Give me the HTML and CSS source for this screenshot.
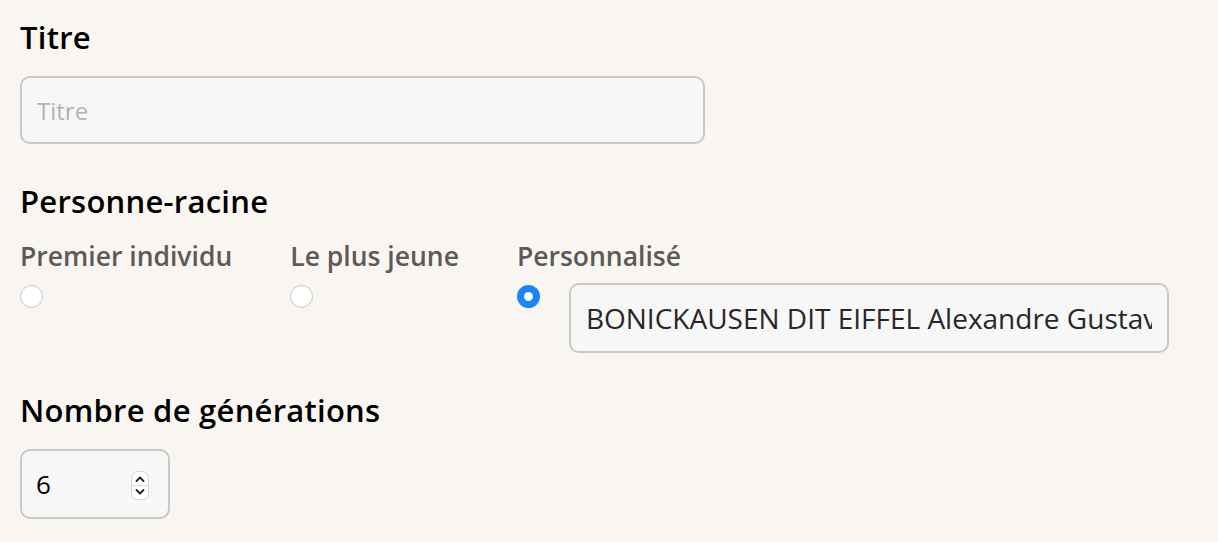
FILE: index.html
```html
<!DOCTYPE html>
<html lang="fr">
<head>
<meta charset="utf-8">
<link rel="stylesheet" href="styles.css">
</head>
<body>
<form class="form">
  <div class="field">
    <label class="field-label" for="titre">Titre</label>
    <input class="text-input title-input" id="titre" type="text" placeholder="Titre">
  </div>

  <div class="field">
    <div class="field-label">Personne-racine</div>
    <div class="root-options">
      <label class="option">
        <span class="option-label">Premier individu</span>
        <input class="radio" type="radio" name="root">
      </label>
      <label class="option">
        <span class="option-label">Le plus jeune</span>
        <input class="radio" type="radio" name="root">
      </label>
      <div class="option">
        <span class="option-label">Personnalisé</span>
        <div class="custom-row">
          <input class="radio" type="radio" name="root" checked>
          <input class="text-input person-input" type="text" value="BONICKAUSEN DIT EIFFEL Alexandre Gustave">
        </div>
      </div>
    </div>
  </div>

  <div class="field">
    <label class="field-label" for="gen">Nombre de générations</label>
    <div class="number-box">
      <input class="number-input" id="gen" type="text" value="6">
      <span class="spinner">
        <svg width="18" height="29" viewBox="0 0 18 29">
          <rect x="0.5" y="0.5" width="17" height="28" rx="6" fill="#fff" stroke="#d4d4d4"/>
          <line x1="1" y1="14.5" x2="17" y2="14.5" stroke="#dcdcdc"/>
          <path d="M5.5 10 L9 6.5 L12.5 10" fill="none" stroke="#222" stroke-width="1.8" stroke-linecap="round" stroke-linejoin="round"/>
          <path d="M5.5 19 L9 22.5 L12.5 19" fill="none" stroke="#222" stroke-width="1.8" stroke-linecap="round" stroke-linejoin="round"/>
        </svg>
      </span>
    </div>
  </div>
</form>
</body>
</html>
```

FILE: styles.css
```css
html, body {
  margin: 0;
  padding: 0;
  background: #f9f5f1;
}

body {
  font-family: "Open Sans", "Noto Sans", sans-serif;
  color: #000;
}

.form {
  padding: 19px 20px 0 20px;
  display: flex;
  flex-direction: column;
  gap: 39px;
}

.field {
  display: flex;
  flex-direction: column;
  align-items: flex-start;
}

.field-label {
  font-size: 31px;
  font-weight: 600;
  line-height: 36px;
  letter-spacing: 0.25px;
  margin-bottom: 21px;
  color: #000;
}

.text-input {
  box-sizing: border-box;
  font-family: "Open Sans", "Noto Sans", sans-serif;
  font-size: 28px;
  color: #2b2626;
  background: #f7f7f7;
  border: 2px solid #c9c9c9;
  border-radius: 10px;
  outline: none;
  margin: 0;
}

.title-input {
  width: 685px;
  height: 68px;
  padding: 0 15px;
  font-size: 24px;
}

.title-input::placeholder {
  color: #b3b3b3;
}

.root-options {
  display: flex;
  gap: 58px;
}

.option {
  display: flex;
  flex-direction: column;
  align-items: flex-start;
}

.option-label {
  font-size: 26.5px;
  font-weight: 600;
  line-height: 32px;
  color: #5c5a59;
  margin-bottom: 13px;
}

.radio {
  appearance: none;
  -webkit-appearance: none;
  width: 23px;
  height: 23px;
  margin: 0;
  border-radius: 50%;
  background: radial-gradient(circle at 50% 40%, #ffffff 60%, #f3f3f3 100%);
  border: 1px solid #c8c8c8;
  box-sizing: border-box;
  flex-shrink: 0;
}

.radio:checked {
  border: 7px solid #1a84f8;
  background: #fff;
}

.custom-row {
  display: flex;
  align-items: flex-start;
  gap: 29px;
  margin-top: -2px;
}

.custom-row .radio {
  margin-top: 2px;
}

.person-input {
  width: 600px;
  height: 70px;
  padding: 0 15px;
}

.number-box {
  box-sizing: border-box;
  width: 150px;
  height: 70px;
  display: flex;
  align-items: center;
  padding: 0 19px 0 14px;
  background: #f7f7f7;
  border: 2px solid #c9c9c9;
  border-radius: 10px;
}

.number-input {
  flex: 1;
  min-width: 0;
  border: none;
  background: transparent;
  outline: none;
  font-family: "Open Sans", "Noto Sans", sans-serif;
  font-size: 26px;
  color: #000;
  padding: 0;
  margin: 0;
}

.spinner {
  display: flex;
  margin-top: 2px;
}
```
